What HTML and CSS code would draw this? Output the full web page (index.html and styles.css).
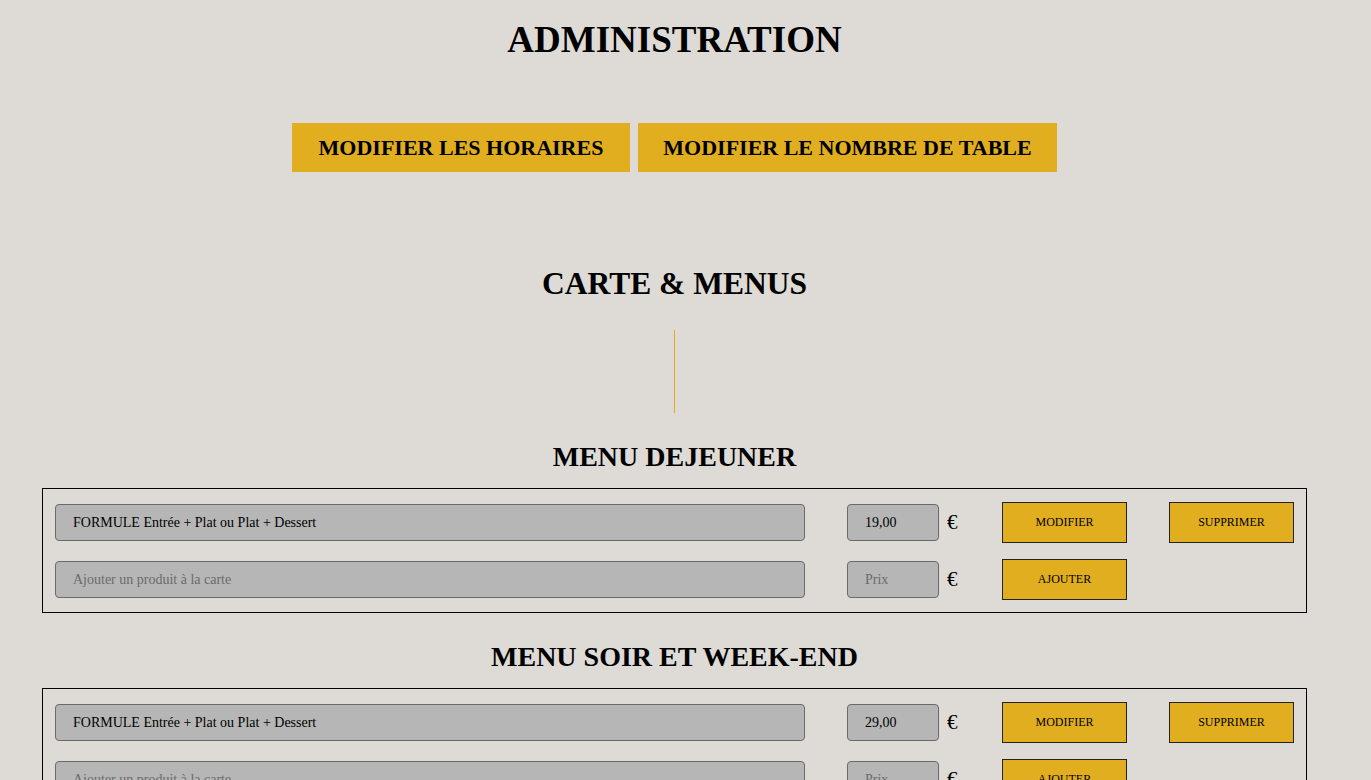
FILE: index.html
```html
<!DOCTYPE html>
<html lang="fr">
<head>
<meta charset="utf-8">
<title>Administration</title>
<link rel="stylesheet" href="styles.css">
</head>
<body>
<div class="page">
  <h1 class="title">ADMINISTRATION</h1>
  <div class="actions">
    <button class="big-btn big-btn-a">MODIFIER LES HORAIRES</button>
    <button class="big-btn big-btn-b">MODIFIER LE NOMBRE DE TABLE</button>
  </div>
  <h2 class="section-title">CARTE &amp; MENUS</h2>
  <div class="divider"></div>

  <h3 class="menu-title">MENU DEJEUNER</h3>
  <div class="menu-box">
    <div class="row">
      <input class="name-input" type="text" value="FORMULE Entrée + Plat ou Plat + Dessert">
      <input class="price-input" type="text" value="19,00">
      <span class="euro">€</span>
      <button class="small-btn">MODIFIER</button>
      <button class="small-btn push">SUPPRIMER</button>
    </div>
    <div class="row">
      <input class="name-input" type="text" placeholder="Ajouter un produit à la carte">
      <input class="price-input" type="text" placeholder="Prix">
      <span class="euro">€</span>
      <button class="small-btn">AJOUTER</button>
    </div>
  </div>

  <h3 class="menu-title">MENU SOIR ET WEEK-END</h3>
  <div class="menu-box">
    <div class="row">
      <input class="name-input" type="text" value="FORMULE Entrée + Plat ou Plat + Dessert">
      <input class="price-input" type="text" value="29,00">
      <span class="euro">€</span>
      <button class="small-btn">MODIFIER</button>
      <button class="small-btn push">SUPPRIMER</button>
    </div>
    <div class="row">
      <input class="name-input" type="text" placeholder="Ajouter un produit à la carte">
      <input class="price-input" type="text" placeholder="Prix">
      <span class="euro">€</span>
      <button class="small-btn">AJOUTER</button>
    </div>
  </div>
</div>
</body>
</html>
```

FILE: styles.css
```css
html, body {
  margin: 0;
  padding: 0;
  background: #dedbd6;
  font-family: "Liberation Serif", "DejaVu Serif", serif;
  color: #000;
}

.page {
  width: 1349px;
  padding-bottom: 40px;
}

.title {
  margin: 0;
  padding-top: 18px;
  font-size: 37px;
  font-weight: bold;
  text-align: center;
  line-height: 44px;
}

.actions {
  display: flex;
  justify-content: center;
  gap: 8px;
  margin-top: 61px;
}

.big-btn {
  height: 49px;
  padding: 0;
  background: #e0ae1e;
  border: none;
  font: bold 22px "Liberation Serif", serif;
  white-space: nowrap;
  color: #000;
}

.big-btn-a { width: 338px; }
.big-btn-b { width: 419px; }

.section-title {
  margin: 0;
  margin-top: 92px;
  font-size: 31.5px;
  font-weight: bold;
  text-align: center;
  line-height: 40px;
}

.divider {
  width: 1px;
  height: 83px;
  background: #e0ae1e;
  margin: 26px auto 0;
}

.menu-title {
  margin: 0;
  margin-top: 26px;
  font-size: 28px;
  font-weight: bold;
  text-align: center;
  line-height: 36px;
}

.menu-box {
  margin: 13px 42px 0;
  border: 1px solid #000;
  padding: 13px 12px 12px 12px;
  display: flex;
  flex-direction: column;
  gap: 16px;
}

.row {
  display: flex;
  align-items: center;
  height: 41px;
}

.name-input, .price-input {
  box-sizing: border-box;
  height: 37px;
  background: #b6b6b6;
  border: 1px solid #6a6a6a;
  border-radius: 4px;
  padding: 0 0 0 17px;
  font: 14px "Liberation Serif", serif;
  color: #000;
  outline: none;
}

.name-input::placeholder, .price-input::placeholder {
  color: #6b6b6b;
}

.name-input {
  width: 750px;
  margin-right: 42px;
}

.price-input {
  width: 92px;
}

.euro {
  width: 63px;
  box-sizing: border-box;
  padding-left: 8px;
  font-size: 21px;
  line-height: 1;
}

.small-btn {
  box-sizing: border-box;
  width: 125px;
  height: 41px;
  background: #e0ae1e;
  border: 1px solid #222;
  font: 12px "Liberation Serif", serif;
  color: #000;
  padding: 0;
}

.small-btn.push {
  margin-left: 42px;
}
```
